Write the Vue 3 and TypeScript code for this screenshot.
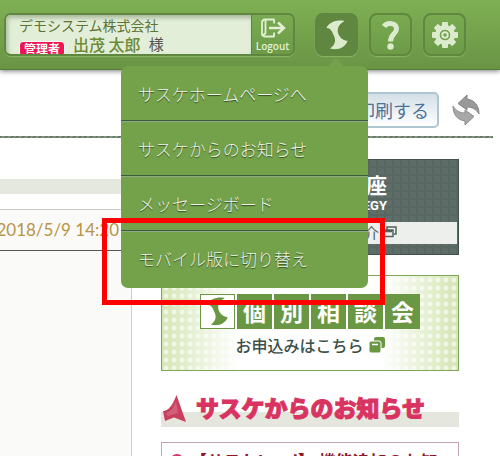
<script setup lang="ts">
interface MenuItem {
  label: string
}

const menu: MenuItem[] = [
  { label: 'サスケホームページへ' },
  { label: 'サスケからのお知らせ' },
  { label: 'メッセージボード' },
  { label: 'モバイル版に切り替え' },
]
const tiles: string[] = ['個', '別', '相', '談', '会']
const swoosh =
  'M28.5 7C21 5.500 13 8 10.500 14C14.500 14 16 17 18 22C20 26 19.500 31 14 34.500C22 37 29.500 33 31.500 27C26 26 23.500 23 22 19C21 14 23 10 28.500 7Z'
</script>

<template>
  <div class="page">
    <header class="header">
      <div class="account">
        <div class="user">
          <div class="company">デモシステム株式会社</div>
          <div class="person"><span class="role">管理者</span><b>出茂 太郎</b><span>様</span></div>
        </div>
        <button class="logout" type="button">
          <svg viewBox="0 0 26 20" width="26" height="20" aria-hidden="true">
            <path d="M14 5.500V1.500H4L2 3.500V17L4 18.500H14V14.500M5.500 2V15L3 17.500" fill="none" stroke="#e2efd4" stroke-width="1.800" stroke-linejoin="round" />
            <path d="M9 10H23M18 4.500L24 10L18 15.500" fill="none" stroke="#e2efd4" stroke-width="2.400" />
          </svg>
          <span>Logout</span>
        </button>
      </div>
      <nav class="tools">
        <button class="tool active" type="button" aria-label="サスケ">
          <svg viewBox="0 0 42 42" width="42" height="42" aria-hidden="true">
            <path :d="swoosh" fill="#dcebce" />
          </svg>
        </button>
        <button class="tool" type="button" aria-label="ヘルプ">
          <svg viewBox="0 0 42 42" width="42" height="42" aria-hidden="true">
            <path d="M14 12.500C17 8 26.500 8.500 26.500 15C26.500 20 20.500 20 20.500 27.500" fill="none" stroke="#dcebce" stroke-width="5" />
            <circle cx="20.500" cy="32.500" r="3.200" fill="#dcebce" />
          </svg>
        </button>
        <button class="tool" type="button" aria-label="設定">
          <svg viewBox="-21 -21 42 42" width="42" height="42" aria-hidden="true">
            <g fill="#dcebce">
              <rect v-for="n in 8" :key="n" x="-3" y="-13" width="6" height="7" rx="1" :transform="`rotate(${n * 45})`" />
            </g>
            <circle r="7.500" fill="none" stroke="#dcebce" stroke-width="5" />
            <circle r="4.500" fill="#dcebce" stroke="#6f9f49" stroke-width="1.500" />
            <circle r="1.700" fill="#6f9f49" />
          </svg>
        </button>
      </nav>
      <ul class="menu">
        <li v-for="item in menu" :key="item.label"><a href="#">{{ item.label }}</a></li>
      </ul>
    </header>

    <div class="actions">
      <button class="print" type="button">印刷する</button>
      <button class="refresh" type="button" aria-label="更新">
        <svg viewBox="0 0 28 32" width="28" height="32" aria-hidden="true">
          <path d="M6 9.500L15 1V5C22 6 27 11 27 20C24 15 20 13 15 13V16Z" fill="#999" stroke="#858585" />
          <path d="M22 22.500L13 31V27C6 26 1 21 1 12C4 17 8 19 13 19V16Z" fill="#a8a8a8" stroke="#8c8c8c" />
        </svg>
      </button>
    </div>

    <main class="columns">
      <section class="main">
        <div class="bar"></div>
        <div class="panel"><time class="date">2018/5/9 14:20</time></div>
      </section>
      <aside class="side">
        <a class="course" href="#">
          <strong>講座</strong>
          <span class="en">STRATEGY</span>
          <span class="strip">ご紹介
            <svg viewBox="0 0 14 12" width="14" height="12" aria-hidden="true">
              <path d="M4 4V1H13V8H11M1 4H10V10.500H1ZM2 5.500H9" fill="none" stroke="#52615b" stroke-width="1.500" />
            </svg>
          </span>
        </a>
        <a class="consult" href="#">
          <span class="tiles">
            <span class="tile logo">
              <svg viewBox="4 4 34 34" width="33" height="33" aria-hidden="true">
                <path :d="swoosh" fill="#6a9743" />
              </svg>
            </span>
            <span v-for="t in tiles" :key="t" class="tile">{{ t }}</span>
          </span>
          <span class="apply">お申込みはこちら
            <svg viewBox="0 0 16 16" width="16" height="16" aria-hidden="true">
              <rect x="5" y="0" width="11" height="11" rx="2" fill="#6a9743" />
              <rect x="0" y="4" width="12" height="12" rx="2" fill="#6a9743" stroke="#fff" />
              <path d="M3 7.500H9" stroke="#fff" stroke-width="1.500" />
            </svg>
          </span>
        </a>
        <h2 class="heading">
          <svg viewBox="0 0 24 28" width="24" height="28" aria-hidden="true">
            <path d="M14.500 0L24 27L12 22.500L3 26L1 16C6 15.500 10 12 14.500 0Z" fill="#c93f5d" />
            <path d="M14 6L16 18L6 21L4 18C9 17 12 12 14 6Z" fill="#d8748a" opacity=".6" />
          </svg>
          <span>サスケからのお知らせ</span>
        </h2>
        <article class="news"><i class="dot"></i><a href="#">【サスケLead】 機能追加のお知らせ</a></article>
      </aside>
    </main>
    <div class="mark"></div>
  </div>
</template>

<style>
body { margin: 0; overflow: hidden; background: #fff; }
</style>

<style scoped>
* { box-sizing: border-box; }
.page {
  position: relative;
  height: 100vh;
  overflow: hidden;
  display: flex;
  flex-direction: column;
  font-family: "Noto Sans CJK JP", sans-serif;
}
button { padding: 0; font: inherit; cursor: pointer; }
a { color: inherit; text-decoration: none; }
svg { display: block; flex: none; }
.header {
  position: relative;
  z-index: 2;
  flex: none;
  display: flex;
  gap: 20px;
  height: 70px;
  padding: 13px 34px 0 4px;
  background: linear-gradient(#7fb054, #699445);
  border-bottom: 1px solid #557b39;
  box-shadow: 0 1px 5px #777;
}
.account {
  flex: 1;
  display: flex;
  height: 43px;
  border: 2px solid #5f883e;
  border-radius: 7px;
  overflow: hidden;
  box-shadow: 0 1px 1px #8bb567;
}
.user {
  flex: 1;
  overflow: hidden;
  padding: 1px 0 0 13px;
  background: #e2eed8;
  box-shadow: inset 2px 3px 4px #aab99d;
}
.company { color: #5c7434; font-size: 14px; line-height: 18px; white-space: nowrap; }
.person { display: flex; align-items: flex-start; gap: 8px; font-size: 15px; line-height: 20px; color: #555; white-space: nowrap; }
.person b { color: #6d8a35; font-size: 16px; font-weight: 500; }
.role {
  margin-top: 7px;
  padding: 0 4px;
  border: 1px solid #fff;
  border-radius: 4px;
  background: #f01450;
  color: #fff;
  font-size: 12px;
  font-weight: 700;
  line-height: 14px;
}
.logout {
  width: 42px;
  display: flex;
  flex-direction: column;
  align-items: center;
  padding-top: 3px;
  border: 0;
  border-left: 1px solid #5f883e;
  background: linear-gradient(#79aa50, #6d9b48);
  color: #e2efd4;
  font-family: "Open Sans", sans-serif;
  font-size: 10px;
  font-weight: 600;
  line-height: 16px;
}
.tools { display: flex; gap: 11px; }
.tool {
  width: 43px;
  height: 43px;
  border: 2px solid #5f883e;
  border-radius: 8px;
  background: linear-gradient(#79aa50, #6d9b48);
  box-shadow: 0 1px 1px #8bb567;
  display: flex;
  align-items: center;
  justify-content: center;
}
.tool.active { background: #5f873f; }
.menu {
  position: absolute;
  top: 66px;
  right: 132px;
  width: 247px;
  margin: 0;
  padding: 1px 0 3px;
  list-style: none;
  border-radius: 7px;
  background: #73a24a;
}
.menu::before {
  content: "";
  position: absolute;
  top: -8px;
  right: 24px;
  border: 8px solid transparent;
  border-top: 0;
  border-bottom-color: #73a24a;
}
.menu li + li { border-top: 1px solid #3c5a3c; box-shadow: inset 0 1px #8fab86; padding-top: 1px; }
.menu a {
  display: block;
  padding-left: 17px;
  color: #eef4e8;
  font-size: 17px;
  font-weight: 300;
  line-height: 53px;
  text-shadow: 0 1px 1px #31471f;
}
.actions {
  flex: none;
  display: flex;
  justify-content: flex-end;
  align-items: center;
  gap: 13px;
  height: 68px;
  margin-right: 7px;
  padding: 12px 13px 0 0;
  background: repeating-linear-gradient(135deg, #647a65 0 2px, #82957f 2px 4px) bottom / 100% 2px no-repeat;
}
.print {
  height: 36px;
  padding: 0 8px;
  border: 2px solid #b0c5d2;
  border-radius: 5px;
  background: linear-gradient(#d3dfe7, #fff);
  color: #4e7198;
  font-size: 18px;
  line-height: 32px;
}
.refresh { border: 0; background: none; }
.columns { display: flex; gap: 29px; padding: 21px 41px 0 0; flex: 1; }
.main { flex: 1; min-width: 0; display: flex; flex-direction: column; padding-top: 20px; }
.bar { height: 15px; margin-bottom: 15px; background: #e5e8df; }
.panel { flex: 1; background: #fafaf8; border: solid #cdcdcd; border-width: 1px 1px 0 0; }
.date {
  display: flex;
  justify-content: flex-end;
  padding-right: 12px;
  border-bottom: 1px solid #555;
  color: #b89446;
  font-family: Lato, sans-serif;
  font-size: 17px;
  line-height: 40px;
  white-space: nowrap;
}
.side { flex: none; width: 298px; }
.course {
  display: block;
  height: 96px;
  padding-top: 12px;
  border: 1px solid #40534b;
  background:
    repeating-linear-gradient(90deg, #0000 0 6px, #586761 6px 8px),
    repeating-linear-gradient(#0000 0 6px, #586761 6px 8px), #5e6d67;
  color: #fff;
  text-align: right;
}
.course strong { display: block; padding-right: 71px; font-size: 21px; line-height: 24px; }
.en { display: block; padding-right: 71px; font: 700 13px/20px Roboto, sans-serif; }
.strip {
  display: flex;
  justify-content: flex-end;
  gap: 4px;
  margin: 6px 1px 0;
  padding: 4px 60px 0 0;
  height: 22px;
  background: #edefed;
  color: #52615b;
  font-size: 15px;
  line-height: 14px;
}
.consult {
  display: flex;
  flex-direction: column;
  align-items: center;
  height: 96px;
  margin-top: 20px;
  padding-top: 18px;
  border: 1px solid #7fa55d;
  background:
    linear-gradient(90deg, #fff0 0, #fff 26%, #fff 74%, #fff0 100%),
    radial-gradient(circle, #ecf5de 2px, #0000 3px) 0 0 / 8px 8px, #d4e5b4;
}
.tiles { display: flex; gap: 2px; }
.tile {
  width: 35px;
  height: 35px;
  background: #6a9743;
  color: #fff;
  font-size: 23px;
  font-weight: 700;
  line-height: 34px;
  text-align: center;
}
.logo { background: #fff; border: 1px solid #6a9743; }
.apply {
  display: flex;
  align-items: center;
  gap: 5px;
  margin-top: 5px;
  color: #3d5149;
  font-size: 16px;
  font-weight: 500;
  line-height: 22px;
}
.heading {
  display: flex;
  align-items: flex-start;
  gap: 10px;
  height: 32px;
  margin: 24px 0 15px;
  padding-left: 1px;
  background: linear-gradient(#0000 17px, #e5e6dd 17px);
  color: #d93461;
  font-size: 23px;
  font-weight: 900;
  line-height: 24px;
  white-space: nowrap;
  -webkit-text-stroke: 1px #d93461;
}
.news {
  display: flex;
  align-items: flex-start;
  gap: 6px;
  padding: 6px 10px 10px 8px;
  border: 1px solid #c9a5b1;
  color: #8f1622;
  font-size: 17px;
  font-weight: 700;
  line-height: 24px;
}
.news a { flex: 1; }
.dot { width: 14px; height: 14px; margin-top: 5px; border-radius: 50%; background: #d93461; }
.mark {
  position: absolute;
  z-index: 3;
  left: 102px;
  top: 218px;
  width: 283px;
  height: 87px;
  border: 5px solid #f00;
  pointer-events: none;
}
</style>
